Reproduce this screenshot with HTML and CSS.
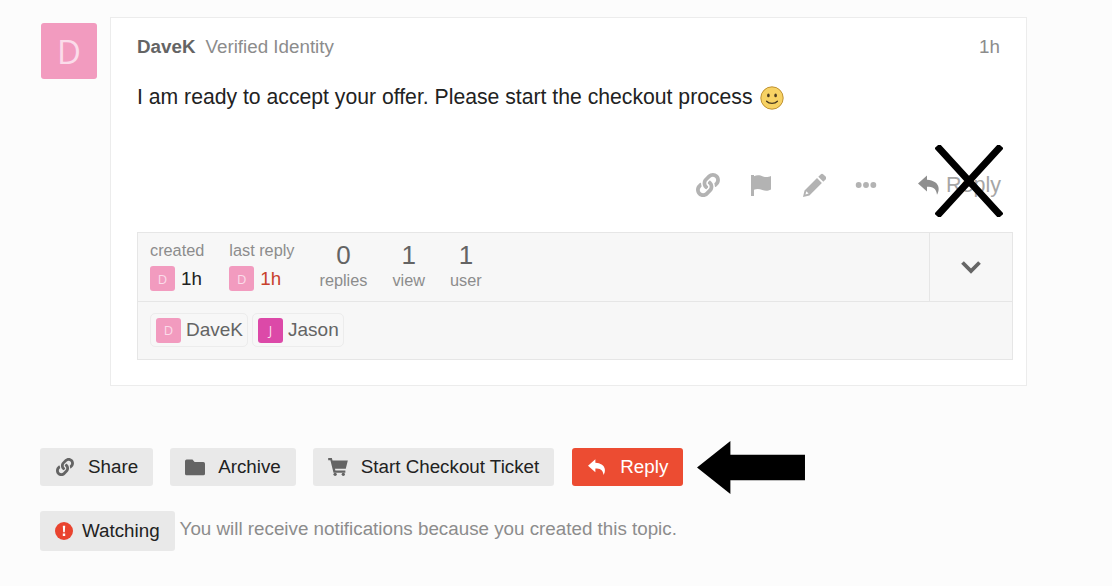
FILE: index.html
```html
<!DOCTYPE html>
<html lang="en">
<head>
  <meta charset="UTF-8" />
  <title>Topic</title>
  <link rel="stylesheet" href="styles.css">
</head>
<body>

  <div class="post">
    <div class="avatar avatar-big">D</div>
    <div class="post-card">
      <div class="post-head">
        <span class="username">DaveK</span>
        <span class="user-title">Verified Identity</span>
        <span class="post-age">1h</span>
      </div>
      <p class="post-text">I am ready to accept your offer. Please start the checkout process
        <svg class="smiley" viewBox="0 0 24 24"><circle cx="12" cy="12" r="11.2" fill="#f7d264" stroke="#b98a2a" stroke-width="0.9"/><ellipse cx="8.4" cy="9.4" rx="1.3" ry="1.9" fill="#4a3a20"/><ellipse cx="15.6" cy="9.4" rx="1.3" ry="1.9" fill="#4a3a20"/><path d="M6.6 15.2c2.6 3 8.2 3 10.8 0" fill="none" stroke="#4a3a20" stroke-width="1.3" stroke-linecap="round"/></svg>
      </p>

      <div class="post-actions">
        <svg class="action-icon" viewBox="0 0 512 512"><path d="M326.6 185.4c59.7 59.8 58.9 155.7.4 214.6l-67.2 67.2c-59.3 59.3-155.7 59.3-215 0-59.3-59.3-59.3-155.7 0-215l37.1-37.1c9.8-9.8 26.8-3.3 27.3 10.6.6 17.7 3.8 35.5 9.7 52.7 2 5.8.6 12.3-3.8 16.6l-13.1 13.1c-28 28-28.9 73.7-1.2 102 28 28.5 74 28.7 102.2.5l67.2-67.2c28.2-28.2 28.1-73.8 0-101.8-3.7-3.7-7.4-6.6-10.3-8.6-4.9-3.4-7.9-8.9-8.1-14.8-.4-10.6 3.4-21.5 11.7-29.8l21.1-21.1c5.5-5.5 14.2-6.2 20.6-1.7 7.3 5.1 14.2 10.9 20.4 17.2zM467.5 44.5c-59.3-59.3-155.7-59.3-215 0L185.3 111.7c-.1.1-.3.3-.4.4-58.5 58.9-59.3 154.8.4 214.6 6.2 6.3 13.1 12.1 20.4 17.2 6.4 4.5 15.1 3.8 20.6-1.7l21.1-21.1c8.3-8.3 12.1-19.2 11.7-29.8-.2-5.9-3.2-11.4-8.1-14.8-2.9-2-6.6-4.9-10.3-8.6-28.1-28-28.2-73.6 0-101.8l67.2-67.2c28.2-28.2 74.2-28 102.2.5 27.7 28.3 26.8 74-1.2 102l-13.1 13.1c-4.4 4.3-5.8 10.8-3.8 16.6 5.9 17.2 9.1 35 9.7 52.7.5 13.9 17.5 20.4 27.3 10.6l37.1-37.1c59.3-59.3 59.3-155.7 0-215z"/></svg>
        <svg class="action-icon" viewBox="0 0 24 24"><path d="M2 2h3v1.2c3.5-1.6 6.5-.6 9 .2 2.4.8 4.7 1.1 8-.4v13.5c-3.4 1.7-6 1.4-8.6.5-2.7-.9-5.3-1.7-8.4-.2V23H2z"/></svg>
        <svg class="action-icon" viewBox="0 0 24 24"><path d="M18.6 1.4a2 2 0 0 1 2.8 0l2.2 2.2a2 2 0 0 1 0 2.8l-2.3 2.3-5-5zM15 5l4.9 4.9L7.4 22.4 1 23.9l1.5-6.4zM4.3 18.3l-.8 3.1 3.1-.8z"/></svg>
        <svg class="action-icon action-dots" viewBox="0 0 24 8"><circle cx="4" cy="4" r="3.2"/><circle cx="12" cy="4" r="3.2"/><circle cx="20" cy="4" r="3.2"/></svg>
        <span class="action-reply">
          <svg class="reply-icon" viewBox="0 0 24 22"><path d="M10 1.5 1 9.5l9 8v-4.8c5.5 0 9.3 1.2 10 8 3-4.3 3.5-14-10-15z"/></svg>
          Reply
        </span>
        <svg class="cross-mark" viewBox="0 0 68 72"><path d="M2 1l64 70M66 1 2 71" stroke="#000" stroke-width="7" fill="none"/></svg>
      </div>

      <div class="topic-map">
        <div class="map-top">
          <div class="map-stats">
            <div class="map-date">
              <span class="map-label">created</span>
              <span class="map-value"><span class="avatar avatar-small">D</span>1h</span>
            </div>
            <div class="map-date">
              <span class="map-label">last reply</span>
              <span class="map-value map-recent"><span class="avatar avatar-small">D</span>1h</span>
            </div>
            <div class="map-count"><span class="count-num">0</span><span class="map-label">replies</span></div>
            <div class="map-count"><span class="count-num">1</span><span class="map-label">view</span></div>
            <div class="map-count"><span class="count-num">1</span><span class="map-label">user</span></div>
          </div>
          <div class="map-toggle">
            <svg class="chevron" viewBox="0 0 22 14"><path d="M2.5 2.5 11 11l8.500-8.500" fill="none" stroke="#666" stroke-width="3.8"/></svg>
          </div>
        </div>
        <div class="map-users">
          <span class="user-chip"><span class="avatar avatar-small">D</span>DaveK</span>
          <span class="user-chip"><span class="avatar avatar-small avatar-jason">J</span>Jason</span>
        </div>
      </div>
    </div>
  </div>

  <div class="footer-buttons">
    <button class="btn">
      <svg class="btn-icon" viewBox="0 0 512 512"><path d="M326.6 185.4c59.7 59.8 58.9 155.7.4 214.6l-67.2 67.2c-59.3 59.3-155.7 59.3-215 0-59.3-59.3-59.3-155.7 0-215l37.1-37.1c9.8-9.8 26.8-3.3 27.3 10.6.6 17.7 3.8 35.5 9.7 52.7 2 5.8.6 12.3-3.8 16.6l-13.1 13.1c-28 28-28.9 73.7-1.2 102 28 28.5 74 28.7 102.2.5l67.2-67.2c28.2-28.2 28.1-73.8 0-101.8-3.7-3.7-7.4-6.6-10.3-8.6-4.9-3.4-7.9-8.9-8.1-14.8-.4-10.6 3.4-21.5 11.7-29.8l21.1-21.1c5.5-5.5 14.2-6.2 20.6-1.7 7.3 5.1 14.2 10.9 20.4 17.2zM467.5 44.5c-59.3-59.3-155.7-59.3-215 0L185.3 111.7c-.1.1-.3.3-.4.4-58.5 58.9-59.3 154.8.4 214.6 6.2 6.3 13.1 12.1 20.4 17.2 6.4 4.5 15.1 3.8 20.6-1.7l21.1-21.1c8.3-8.3 12.1-19.2 11.7-29.8-.2-5.9-3.2-11.4-8.1-14.8-2.9-2-6.6-4.9-10.3-8.6-28.1-28-28.2-73.6 0-101.8l67.2-67.2c28.2-28.2 74.2-28 102.2.5 27.7 28.3 26.8 74-1.2 102l-13.1 13.1c-4.4 4.3-5.8 10.8-3.8 16.6 5.9 17.2 9.1 35 9.7 52.7.5 13.9 17.5 20.4 27.3 10.6l37.1-37.1c59.3-59.3 59.3-155.7 0-215z"/></svg>
      Share
    </button>
    <button class="btn">
      <svg class="btn-icon" viewBox="0 0 24 20"><path d="M2 1h7l2.5 3H22a2 2 0 0 1 2 2v12a2 2 0 0 1-2 2H2a2 2 0 0 1-2-2V3a2 2 0 0 1 2-2z"/></svg>
      Archive
    </button>
    <button class="btn">
      <svg class="btn-icon" viewBox="0 0 24 22"><path d="M0 0h4.500l.8 3H24l-2.500 10H8.300l.5 2.200H21V18H6.500L2.700 2.700H0z"/><circle cx="8.500" cy="20" r="2"/><circle cx="18.500" cy="20" r="2"/></svg>
      Start Checkout Ticket
    </button>
    <button class="btn btn-primary">
      <svg class="btn-icon" viewBox="0 0 24 22"><path d="M10 1.500 1 9.500l9 8v-4.800c5.500 0 9.300 1.200 10 8 3-4.300 3.500-14-10-15z"/></svg>
      Reply
    </button>
    <svg class="arrow-mark" viewBox="0 0 110 54"><path d="M0 27 34 0v14h76v26H34v14z" fill="#000"/></svg>
  </div>

  <div class="notifications">
    <button class="btn btn-watching">
      <svg class="watch-icon" viewBox="0 0 18 18"><circle cx="9" cy="9" r="9" fill="#e9442f"/><path d="M7.800 3.800h2.400l-.4 6.500H8.200zM7.800 11.600h2.400V14H7.800z" fill="#fff"/></svg>
      Watching
    </button>
    <span class="notify-text">You will receive notifications because you created this topic.</span>
  </div>

</body>
</html>
```

FILE: styles.css
```css
* {
  box-sizing: border-box;
}

body {
  margin: 0;
  padding: 17px 85px 0 41px;
  background: #fcfcfc;
  color: #222;
  font-family: 'Liberation Sans', Arial, sans-serif;
  font-size: 20px;
}

.post {
  display: flex;
  align-items: flex-start;
  gap: 13px;
}

.avatar {
  display: inline-flex;
  align-items: center;
  justify-content: center;
  flex: none;
  background: #f29bbf;
  color: #fbdcea;
  border-radius: 3px;
}

.avatar-big {
  width: 56px;
  height: 56px;
  margin-top: 6px;
  font-family: 'Open Sans', sans-serif;
  font-size: 33px;
}

.avatar-small {
  width: 25px;
  height: 25px;
  font-size: 13px;
  font-family: 'Open Sans', sans-serif;
}

.avatar-jason {
  background: #dc49a8;
}

.post-card {
  flex: 1;
  height: 369px;
  padding: 0 13px 0 26px;
  background: #fff;
  border: 1px solid #ececec;
}

.post-head {
  display: flex;
  align-items: baseline;
  padding-top: 18px;
  font-size: 18.8px;
  line-height: 22px;
}

.username {
  font-weight: bold;
  color: #646464;
  margin-right: 10px;
}

.user-title {
  color: #8c8c8c;
}

.post-age {
  margin-left: auto;
  padding-right: 13px;
  color: #8c8c8c;
}

.post-text {
  margin: 27px 0 0;
  font-size: 21.2px;
  line-height: 24px;
  color: #222;
}

.smiley {
  width: 24px;
  height: 24px;
  margin-left: 2px;
  vertical-align: -6px;
}

.post-actions {
  position: relative;
  display: flex;
  align-items: center;
  justify-content: flex-end;
  height: 40px;
  margin-top: 55px;
  padding-right: 12px;
  color: #a6a6a6;
}

.action-icon {
  width: 24px;
  height: 24px;
  margin-right: 29px;
  fill: #b3b3b3;
}

.action-dots {
  width: 22px;
  height: 8px;
  margin-right: 40px;
}

.action-reply {
  display: flex;
  align-items: center;
  gap: 5px;
  font-size: 21.5px;
}

.reply-icon {
  width: 24px;
  height: 22px;
  fill: #8f8f8f;
}

.cross-mark {
  position: absolute;
  right: 10px;
  top: -20px;
  width: 68px;
  height: 72px;
}

.topic-map {
  margin-top: 27px;
  background: #f7f7f7;
  border: 1px solid #e6e6e6;
}

.map-top {
  display: flex;
  height: 69px;
  border-bottom: 1px solid #e6e6e6;
}

.map-stats {
  display: flex;
  flex: 1;
  padding: 7px 0 0 12px;
}

.map-date {
  display: flex;
  flex-direction: column;
  margin-right: 25px;
}

.map-label {
  font-size: 16.3px;
  line-height: 20px;
  color: #8c8c8c;
}

.map-value {
  display: flex;
  align-items: center;
  gap: 6px;
  margin-top: 6px;
  font-size: 18.8px;
  color: #222;
}

.map-recent {
  color: #c8412c;
}

.map-count {
  display: flex;
  flex-direction: column;
  align-items: center;
  margin-right: 25px;
}

.count-num {
  font-size: 26px;
  line-height: 30px;
  color: #646464;
}

.map-toggle {
  display: flex;
  align-items: center;
  justify-content: center;
  width: 83px;
  border-left: 1px solid #e6e6e6;
}

.chevron {
  width: 22px;
  height: 14px;
}

.map-users {
  display: flex;
  gap: 4px;
  height: 57px;
  padding: 11px 12px;
}

.user-chip {
  display: flex;
  align-items: center;
  gap: 5px;
  height: 34px;
  padding: 0 4px 0 5px;
  border: 1px solid #ececec;
  border-radius: 5px;
  font-size: 19px;
  color: #646464;
}

.footer-buttons {
  position: relative;
  display: flex;
  gap: 17px;
  margin-top: 62px;
  margin-left: -1px;
}

.btn {
  display: flex;
  align-items: center;
  height: 38px;
  padding: 0 15px;
  border: none;
  border-radius: 3px;
  background: #e9e9e9;
  color: #222;
  font-family: inherit;
  font-size: 18.8px;
}

.btn-icon {
  width: 20px;
  height: 18px;
  margin-right: 13px;
  fill: #646464;
}

.btn-primary {
  margin-left: 1px;
  background: #ec4c32;
  color: #fff;
}

.btn-primary .btn-icon {
  fill: #fff;
}

.arrow-mark {
  position: absolute;
  left: 656px;
  top: -7px;
  width: 110px;
  height: 53px;
}

.notifications {
  display: flex;
  align-items: flex-start;
  gap: 5px;
  margin-top: 25px;
  margin-left: -1px;
}

.btn-watching {
  height: 40px;
  padding: 0 15px 1px;
}

.watch-icon {
  width: 18px;
  height: 18px;
  margin-right: 9px;
}

.notify-text {
  padding-top: 7px;
  font-size: 18.8px;
  line-height: 22px;
  color: #8c8c8c;
}
```
